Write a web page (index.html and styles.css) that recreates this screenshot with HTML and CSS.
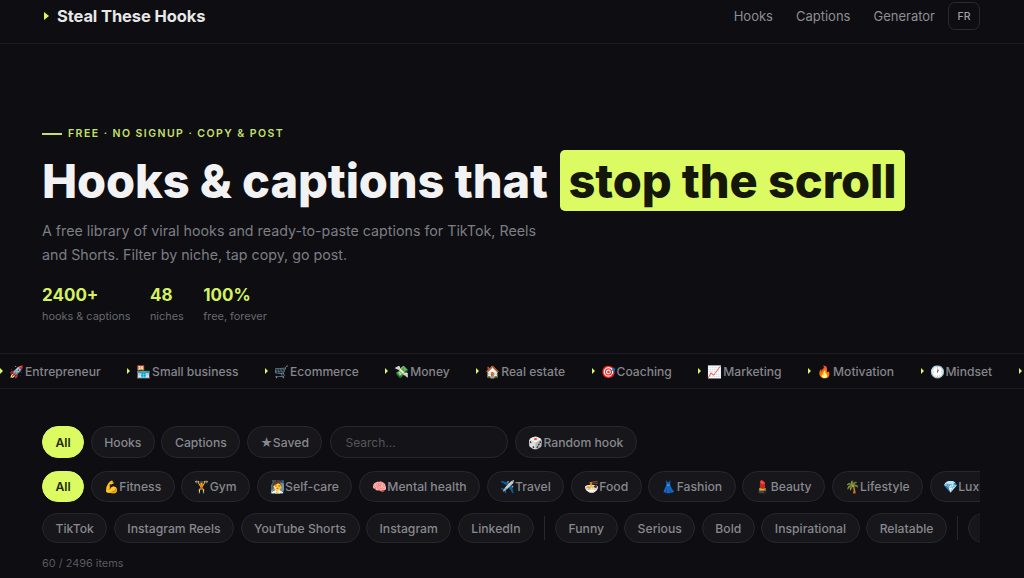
FILE: index.html
```html
<!DOCTYPE html>
<html>
<head>
    <title>Steal These Hooks</title>
    <link rel="stylesheet" href="styles.css">
</head>
<body>
    <header class="topbar">
        <div class="brand"><span class="arrow"></span>Steal These Hooks</div>
        <nav class="nav">
            <a>Hooks</a>
            <a>Captions</a>
            <a>Generator</a>
            <button class="lang">FR</button>
        </nav>
    </header>
    <section class="hero">
        <div class="eyebrow"><span class="dash"></span>FREE · NO SIGNUP · COPY &amp; POST</div>
        <h1>Hooks &amp; captions that <span class="mark">stop the scroll</span></h1>
        <p class="lead">A free library of viral hooks and ready-to-paste captions for TikTok, Reels and Shorts. Filter by niche, tap copy, go post.</p>
        <div class="stats">
            <div><b>2400+</b><span>hooks &amp; captions</span></div>
            <div><b>48</b><span>niches</span></div>
            <div><b>100%</b><span>free, forever</span></div>
        </div>
    </section>
    <div class="ticker">
        <span><i class="arrow"></i><em>🚀</em>Entrepreneur</span>
        <span><i class="arrow"></i><em>🏪</em>Small business</span>
        <span><i class="arrow"></i><em>🛒</em>Ecommerce</span>
        <span><i class="arrow"></i><em>💸</em>Money</span>
        <span><i class="arrow"></i><em>🏠</em>Real estate</span>
        <span><i class="arrow"></i><em>🎯</em>Coaching</span>
        <span><i class="arrow"></i><em>📈</em>Marketing</span>
        <span><i class="arrow"></i><em>🔥</em>Motivation</span>
        <span><i class="arrow"></i><em>🕐</em>Mindset</span>
        <span><i class="arrow"></i></span>
    </div>
    <section class="filters">
        <div class="row row-type">
            <button class="chip on">All</button>
            <button class="chip">Hooks</button>
            <button class="chip">Captions</button>
            <button class="chip"><em>★</em>Saved</button>
            <input class="search" type="text" placeholder="Search...">
            <button class="chip"><em>🎲</em>Random hook</button>
        </div>
        <div class="row row-niche">
            <button class="chip on">All</button>
            <button class="chip"><em>💪</em>Fitness</button>
            <button class="chip"><em>🏋</em>Gym</button>
            <button class="chip"><em>🧖</em>Self-care</button>
            <button class="chip"><em>🧠</em>Mental health</button>
            <button class="chip"><em>✈️</em>Travel</button>
            <button class="chip"><em>🍜</em>Food</button>
            <button class="chip"><em>👗</em>Fashion</button>
            <button class="chip"><em>💄</em>Beauty</button>
            <button class="chip"><em>🌴</em>Lifestyle</button>
            <button class="chip"><em>💎</em>Luxury</button>
        </div>
        <div class="row row-tone">
            <button class="chip">TikTok</button>
            <button class="chip">Instagram Reels</button>
            <button class="chip">YouTube Shorts</button>
            <button class="chip">Instagram</button>
            <button class="chip">LinkedIn</button>
            <span class="sep"></span>
            <button class="chip">Funny</button>
            <button class="chip">Serious</button>
            <button class="chip">Bold</button>
            <button class="chip">Inspirational</button>
            <button class="chip">Relatable</button>
            <span class="sep"></span>
            <button class="chip">Short</button>
        </div>
        <div class="count">60 / 2496 items</div>
    </section>
</body>
</html>
```

FILE: styles.css
```css
* {
    box-sizing: border-box;
}
html, body {
    height: 578px;
    overflow: hidden;
}
body {
    margin: 0;
    background: #0d0d12;
    color: #f2f2f2;
    font-family: Inter, 'Noto Sans', sans-serif;
}
em {
    font-style: normal;
    font-size: 12px;
}
.arrow {
    display: inline-block;
    width: 0;
    height: 0;
    border-left: 5px solid #d9f85f;
    border-top: 4px solid transparent;
    border-bottom: 4px solid transparent;
}
.topbar {
    height: 44px;
    padding: 2px 44px 0;
    display: flex;
    align-items: flex-start;
    justify-content: space-between;
    border-bottom: 1px solid #1c1c22;
}
.brand {
    height: 28px;
    display: flex;
    align-items: center;
    gap: 8px;
    font-size: 16.5px;
    font-weight: 700;
    letter-spacing: -0.1px;
    color: #e8e8e8;
}
.nav {
    display: flex;
    align-items: center;
    gap: 23px;
    font-size: 13px;
    color: #8e8e93;
}
.lang {
    width: 32px;
    height: 28px;
    margin-left: -10px;
    background: none;
    border: 1px solid #2a2a31;
    border-radius: 7px;
    color: #a0a0a5;
    font: 500 10.5px Inter, sans-serif;
}
.hero {
    padding: 83px 42px 0;
    height: 309px;
}
.eyebrow {
    display: flex;
    align-items: center;
    gap: 6px;
    font-size: 10.5px;
    font-weight: 600;
    letter-spacing: 1.45px;
    color: #c5e06a;
}
.dash {
    width: 20px;
    height: 2px;
    background: #c5e06a;
}
h1 {
    margin: 10px 0 0;
    font-size: 47px;
    line-height: 61px;
    font-weight: 800;
    letter-spacing: -0.1px;
    white-space: nowrap;
}
.mark {
    display: inline-block;
    margin-left: 2px;
    padding: 0 8.5px;
    background: #dcfb62;
    color: #14170a;
    border-radius: 5px;
}
.lead {
    margin: 8px 0 0;
    width: 510px;
    font-size: 14.25px;
    line-height: 24px;
    color: #7d7d82;
}
.stats {
    display: flex;
    gap: 19.5px;
    margin-top: 18px;
}
.stats b {
    display: block;
    font-size: 17px;
    line-height: 20px;
    font-weight: 700;
    color: #d4f25f;
}
.stats span {
    display: block;
    margin-top: 4px;
    font-size: 10.9px;
    line-height: 14px;
    color: #68686d;
}
.ticker {
    height: 36px;
    display: flex;
    align-items: center;
    gap: 26.5px;
    overflow: hidden;
    white-space: nowrap;
    border-top: 1px solid #1c1c22;
    border-bottom: 1px solid #1c1c22;
    font-size: 12.1px;
    font-weight: 500;
    color: #85858a;
}
.ticker span {
    display: flex;
    align-items: center;
    gap: 6px;
    flex-shrink: 0;
}
.ticker em {
    margin-right: -5px;
}
.ticker .arrow {
    border-left-width: 3px;
    border-top-width: 3px;
    border-bottom-width: 3px;
}
.filters {
    padding: 37px 44px 0 42px;
}
.row {
    display: flex;
    align-items: center;
    gap: 6.5px;
    overflow: hidden;
}
.row-type {
    margin-bottom: 13px;
}
.row-type .chip {
    height: 32px;
}
.row-niche {
    margin-bottom: 11px;
}
.row-tone .chip {
    height: 30px;
}
.chip {
    flex-shrink: 0;
    height: 31px;
    padding: 0 12.5px;
    background: #16161b;
    border: 1px solid #27272d;
    border-radius: 16px;
    color: #88888d;
    font: 500 12.2px Inter, 'Noto Color Emoji', sans-serif;
}
.chip.on {
    background: #dcfb62;
    border-color: #dcfb62;
    color: #23270e;
    font-weight: 600;
}
.search {
    width: 178px;
    height: 32px;
    margin-left: 1.5px;
    padding: 0 14px;
    background: #141418;
    border: 1px solid #27272d;
    border-radius: 16px;
    color: #888;
    font: 12px Inter, sans-serif;
}
.search::placeholder {
    color: #55555a;
}
.sep {
    flex-shrink: 0;
    width: 1px;
    height: 24px;
    margin: 0 3.5px;
    background: #27272d;
}
.count {
    font-size: 10.9px;
    color: #5a5a5f;
    margin-top: 13px;
}
```
